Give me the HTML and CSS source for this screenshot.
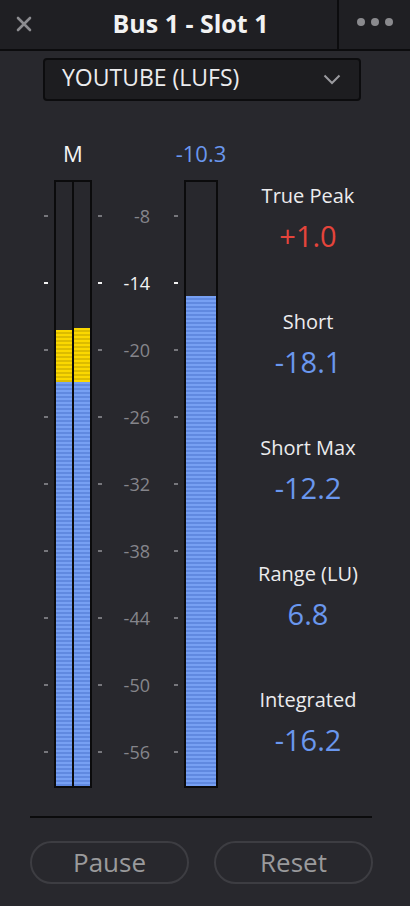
FILE: index.html
```html
<!DOCTYPE html>
<html>
<head>
<meta charset="utf-8">
<link rel="stylesheet" href="styles.css">
</head>
<body>
<div class="panel">
  <header class="topbar">
    <button class="close" aria-label="Close">
      <svg width="16" height="16" viewBox="0 0 16 16"><path d="M2 2 L14 14 M14 2 L2 14" stroke="#8c8c90" stroke-width="2.6" stroke-linecap="round"/></svg>
    </button>
    <h1 class="title">Bus 1 - Slot 1</h1>
    <div class="more"><span class="dot"></span><span class="dot"></span><span class="dot"></span></div>
  </header>

  <div class="preset-row">
    <div class="select">
      <span class="select-text">YOUTUBE (LUFS)</span>
      <svg class="chevron" width="18" height="11" viewBox="0 0 18 11"><path d="M1.5 1.5 L9 9 L16.5 1.5" fill="none" stroke="#9a9a9e" stroke-width="2"/></svg>
    </div>
  </div>

  <main class="meters">
    <div class="head head-m">M</div>
    <div class="head head-val">-10.3</div>

    <div class="ticks-left">
      <div class="trow"><i class="tick"></i></div>
      <div class="trow"><i class="tick hi"></i></div>
      <div class="trow"><i class="tick"></i></div>
      <div class="trow"><i class="tick"></i></div>
      <div class="trow"><i class="tick"></i></div>
      <div class="trow"><i class="tick"></i></div>
      <div class="trow"><i class="tick"></i></div>
      <div class="trow"><i class="tick"></i></div>
      <div class="trow"><i class="tick"></i></div>
    </div>

    <div class="meter meter-m">
      <div class="bar"><div class="fill"><div class="seg yellow" style="height:52px"></div><div class="seg blue" style="height:404px"></div></div></div>
      <div class="bar"><div class="fill"><div class="seg yellow" style="height:54px"></div><div class="seg blue" style="height:404px"></div></div></div>
    </div>

    <div class="scale">
      <div class="srow"><i class="tick"></i><span class="lbl">-8</span><i class="tick"></i></div>
      <div class="srow hi"><i class="tick"></i><span class="lbl">-14</span><i class="tick"></i></div>
      <div class="srow"><i class="tick"></i><span class="lbl">-20</span><i class="tick"></i></div>
      <div class="srow"><i class="tick"></i><span class="lbl">-26</span><i class="tick"></i></div>
      <div class="srow"><i class="tick"></i><span class="lbl">-32</span><i class="tick"></i></div>
      <div class="srow"><i class="tick"></i><span class="lbl">-38</span><i class="tick"></i></div>
      <div class="srow"><i class="tick"></i><span class="lbl">-44</span><i class="tick"></i></div>
      <div class="srow"><i class="tick"></i><span class="lbl">-50</span><i class="tick"></i></div>
      <div class="srow"><i class="tick"></i><span class="lbl">-56</span><i class="tick"></i></div>
    </div>

    <div class="meter meter-s">
      <div class="bar"><div class="fill"><div class="seg blue" style="height:490px"></div></div></div>
    </div>

    <div class="stats">
      <div class="stat"><div class="stat-label">True Peak</div><div class="stat-value red">+1.0</div></div>
      <div class="stat"><div class="stat-label">Short</div><div class="stat-value">-18.1</div></div>
      <div class="stat"><div class="stat-label">Short Max</div><div class="stat-value">-12.2</div></div>
      <div class="stat"><div class="stat-label">Range (LU)</div><div class="stat-value">6.8</div></div>
      <div class="stat"><div class="stat-label">Integrated</div><div class="stat-value">-16.2</div></div>
    </div>
  </main>

  <hr class="sep">

  <div class="actions">
    <button class="pill">Pause</button>
    <button class="pill">Reset</button>
  </div>
</div>
</body>
</html>
```

FILE: styles.css
```css
* { box-sizing: border-box; }
html, body { margin: 0; padding: 0; }
body {
  background: #28282d;
  font-family: "Open Sans", "Noto Sans", sans-serif;
  color: #e6e6e8;
  width: 410px;
  height: 906px;
  overflow: hidden;
}
.panel { width: 410px; }

.topbar {
  height: 51px;
  display: flex;
  align-items: stretch;
  background: #1f1f23;
  border-bottom: 2px solid #0c0c0e;
}
.close {
  width: 48px;
  border: 0;
  background: transparent;
  padding: 0;
  display: flex;
  align-items: center;
  justify-content: center;
}
.close svg { margin-top: -2px; }
.title {
  flex: 1;
  margin: 0;
  padding-right: 4px;
  text-align: center;
  font-size: 25px;
  font-weight: 700;
  line-height: 47px;
  color: #f2f2f2;
}
.more {
  width: 73px;
  border-left: 2px solid #0c0c0e;
  display: flex;
  align-items: center;
  justify-content: center;
  gap: 6px;
  padding-bottom: 5px;
}
.dot {
  width: 8px;
  height: 8px;
  border-radius: 50%;
  background: #8a8a8e;
}

.preset-row { padding: 7px 0 0 43px; }
.select {
  width: 318px;
  height: 43px;
  background: #1d1d20;
  border: 2px solid #0c0c0e;
  border-radius: 4px;
  display: flex;
  align-items: center;
  justify-content: space-between;
  padding: 0 18px 0 17px;
}
.select-text {
  font-size: 23px;
  color: #ececee;
  line-height: 30px;
  margin-top: -6px;
}
.chevron { margin-top: -1px; }

.meters {
  margin-top: 37px;
  display: grid;
  grid-template-columns: 54px 38px 92px 34px 192px;
  grid-template-rows: 30px 608px;
  row-gap: 12px;
}
.head {
  font-size: 22px;
  line-height: 30px;
  text-align: center;
}
.head-m { grid-column: 2; grid-row: 1; color: #f4f4f4; }
.head-val { grid-column: 4; grid-row: 1; color: #6a97ee; white-space: nowrap; margin: 0 -20px; }

.tick {
  display: block;
  width: 4px;
  height: 2px;
  background: #77777c;
}
.tick.hi, .srow.hi .tick { background: #f2f2f2; }

.ticks-left {
  grid-column: 1; grid-row: 2;
  display: flex;
  flex-direction: column;
  padding: 2px 6px 2px 0;
}
.trow { flex: 1; display: flex; align-items: center; justify-content: flex-end; }

.meter {
  grid-row: 2;
  display: flex;
  background: #0b0b0c;
  padding: 2px;
  gap: 2px;
}
.meter-m { grid-column: 2; }
.meter-s { grid-column: 4; }
.bar {
  flex: 1;
  background: #28282d;
  display: flex;
  flex-direction: column;
  justify-content: flex-end;
}
.fill { display: flex; flex-direction: column; }
.seg.blue {
  background: repeating-linear-gradient(to bottom, #77a0f3 0 2px, #6089e0 2px 4px);
}
.seg.yellow {
  background: repeating-linear-gradient(to bottom, #fbd800 0 2px, #dcbc00 2px 4px);
}

.scale {
  grid-column: 3; grid-row: 2;
  display: flex;
  flex-direction: column;
  padding: 2px 0;
}
.srow {
  flex: 1;
  display: grid;
  grid-template-columns: 4px 48px 28px;
  align-items: center;
  padding-left: 6px;
}
.srow .tick:last-child { margin-left: 24px; }
.lbl {
  font-size: 18px;
  line-height: 24px;
  color: #85858b;
  text-align: right;
}
.srow.hi .lbl { color: #f4f4f4; }

.stats {
  grid-column: 5; grid-row: 2;
  padding: 2px 12px 0 0;
  display: flex;
  flex-direction: column;
  gap: 53px;
  text-align: center;
}
.stat { display: flex; flex-direction: column; gap: 7px; }
.stat-label { font-size: 20px; line-height: 28px; color: #ececee; }
.stat-value { font-size: 29px; line-height: 38px; color: #6a97ee; }
.stat-value.red { color: #e5443b; }

.sep {
  margin: 28px 38px 0 30px;
  border: 0;
  height: 2px;
  background: #0b0b0c;
}

.actions {
  display: flex;
  gap: 25px;
  padding: 23px 0 0 30px;
}
.pill {
  width: 159px;
  height: 43px;
  border-radius: 22px;
  border: 2px solid #3d3d42;
  background: transparent;
  font-family: "Open Sans", "Noto Sans", sans-serif;
  font-size: 26px;
  line-height: 30px;
  color: #9a9a9c;
  padding: 0 0 2px;
}
```
